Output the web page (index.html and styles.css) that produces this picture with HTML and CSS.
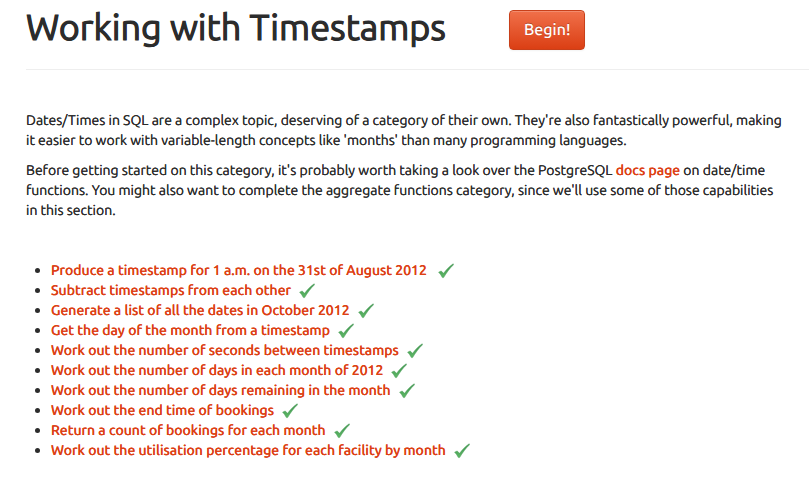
FILE: index.html
```html
<!DOCTYPE html>
<html lang="en">
<head>
<meta charset="utf-8">
<meta name="viewport" content="width=device-width, initial-scale=1">
<title>Working with Timestamps</title>
<link rel="stylesheet" href="styles.css">
</head>
<body>
<svg class="sprite" aria-hidden="true">
<linearGradient id="leaf" x1="0" y1="0" x2="0" y2="1"><stop offset="0" stop-color="#3f9350"/><stop offset="1" stop-color="#5fb866"/></linearGradient>
<symbol id="tick" viewBox="0 0 16 16"><path d="M.6 9.2 L3.1 8 L5.6 10.3 C8.4 6.6 11.6 3.2 15.2 .8 L15.5 1.8 C11.6 5.4 8.6 9.6 5.6 14.6 L4.4 14.6 C3.4 12.6 2.2 10.6 .6 9.2 Z" fill="url(#leaf)" stroke="#4a9f58" stroke-width=".5"/></symbol>
</svg>
<main class="page">
<header class="page-header">
<h1>Working with Timestamps</h1>
<button class="begin" type="button">Begin!</button>
</header>
<section class="intro">
<p>Dates/Times in SQL are a complex topic, deserving of a category of their own. They're also fantastically powerful, making it easier to work with variable-length concepts like 'months' than many programming languages.</p>
<p>Before getting started on this category, it's probably worth taking a look over the PostgreSQL <a href="#docs">docs page</a> on date/time functions. You might also want to complete the aggregate functions category, since we'll use some of those capabilities in this section.</p>
</section>
<ul class="exercises">
<li><a href="#1">Produce a timestamp for 1 a.m. on the 31st of August 2012</a> <svg class="tick"><use href="#tick"/></svg></li>
<li><a href="#2">Subtract timestamps from each other</a><svg class="tick"><use href="#tick"/></svg></li>
<li><a href="#3">Generate a list of all the dates in October 2012</a><svg class="tick"><use href="#tick"/></svg></li>
<li><a href="#4">Get the day of the month from a timestamp</a><svg class="tick"><use href="#tick"/></svg></li>
<li><a href="#5">Work out the number of seconds between timestamps</a><svg class="tick"><use href="#tick"/></svg></li>
<li><a href="#6">Work out the number of days in each month of 2012</a><svg class="tick"><use href="#tick"/></svg></li>
<li><a href="#7">Work out the number of days remaining in the month</a><svg class="tick"><use href="#tick"/></svg></li>
<li><a href="#8">Work out the end time of bookings</a><svg class="tick"><use href="#tick"/></svg></li>
<li><a href="#9">Return a count of bookings for each month</a><svg class="tick"><use href="#tick"/></svg></li>
<li><a href="#10">Work out the utilisation percentage for each facility by month</a><svg class="tick"><use href="#tick"/></svg></li>
</ul>
</main>
</body>
</html>
```
FILE: styles.css
```css
* { box-sizing: border-box; }
body { margin: 0; background: #fff; color: #2c2c2c; font: 400 14px/20px Ubuntu, "Noto Sans", sans-serif; text-rendering: geometricPrecision; text-shadow: 0 0 0 currentColor; }
.sprite { position: absolute; width: 0; height: 0; }
.page { padding: 8px 0 20px 26px; }
.page-header { display: flex; align-items: flex-start; gap: 63px; padding-bottom: 19px; border-bottom: 1px solid #eee; }
h1 { margin: 0; font-size: 36px; line-height: 38px; font-weight: 400; -webkit-text-stroke: 1px currentColor; }
.begin { margin-top: 2px; height: 40px; padding: 0 14px; border: 1px solid #c8401a; border-radius: 4px; background: linear-gradient(#f0704a, #db3f14); box-shadow: inset 0 1px 0 rgba(255, 255, 255, .2), 0 1px 2px rgba(0, 0, 0, .05); color: #fff; font: 500 16px/20px Ubuntu, "Noto Sans", sans-serif; text-rendering: inherit; text-shadow: 0 -1px 0 rgba(0, 0, 0, .25); }
.intro { padding: 40px 24px 0 0; }
p { margin: 0 0 10px; }
a { color: #dd4014; text-decoration: none; font-weight: 500; text-shadow: 0 0 0 currentColor; }
.exercises { margin: 40px 0 0; padding: 0 0 0 25px; }
.exercises li::marker { font-size: 16px; }
.tick { width: 16px; height: 16px; margin-left: 8px; vertical-align: -4px; }
```
